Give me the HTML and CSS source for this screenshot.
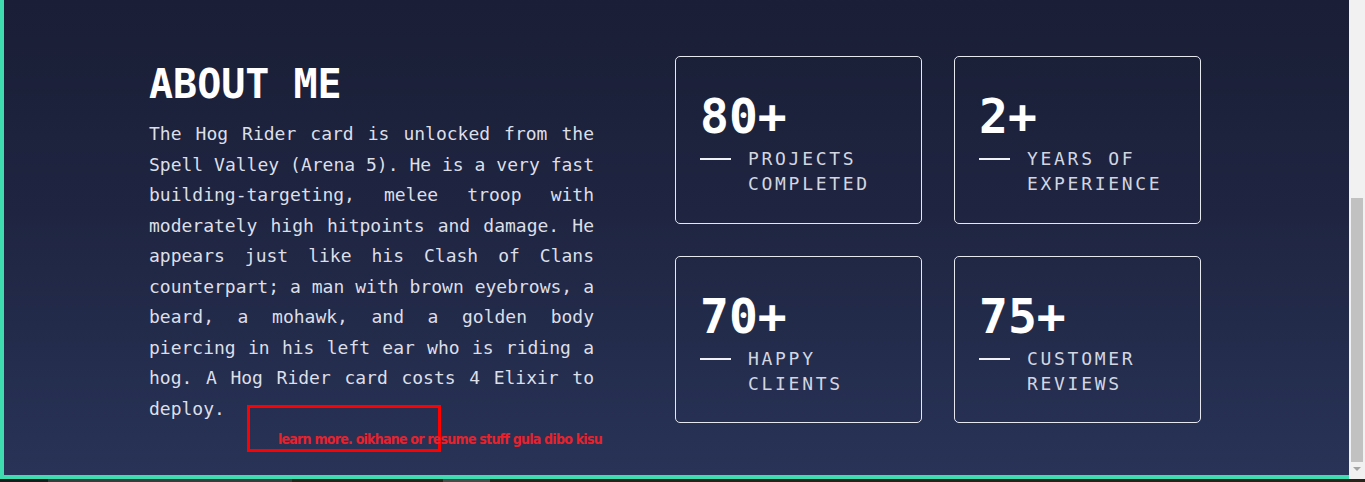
FILE: index.html
```html
<!DOCTYPE html>
<html lang="en">
<head>
<meta charset="utf-8">
<title>About me</title>
<link rel="stylesheet" href="styles.css">
</head>
<body>
<div class="screen">
  <div class="viewport">
    <main class="frame">
      <section class="about">
        <div class="about-text">
          <h1 class="title">ABOUT ME</h1>
          <p class="desc">The Hog Rider card is unlocked from the Spell Valley (Arena 5). He is a very fast building-targeting, melee troop with moderately high hitpoints and damage. He appears just like his Clash of Clans counterpart; a man with brown eyebrows, a beard, a mohawk, and a golden body piercing in his left ear who is riding a hog. A Hog Rider card costs 4 Elixir to deploy.</p>
        </div>
        <div class="stats">
          <div class="card">
            <div class="num">80+</div>
            <div class="label"><span class="dash"></span><span class="label-text">PROJECTS<br>COMPLETED</span></div>
          </div>
          <div class="card">
            <div class="num">2+</div>
            <div class="label"><span class="dash"></span><span class="label-text">YEARS OF<br>EXPERIENCE</span></div>
          </div>
          <div class="card">
            <div class="num">70+</div>
            <div class="label"><span class="dash"></span><span class="label-text">HAPPY<br>CLIENTS</span></div>
          </div>
          <div class="card">
            <div class="num">75+</div>
            <div class="label"><span class="dash"></span><span class="label-text">CUSTOMER<br>REVIEWS</span></div>
          </div>
        </div>
      </section>
      <div class="note-box"></div>
      <div class="note-text">learn more. oikhane or resume stuff gula dibo kisu</div>
    </main>
    <div class="scrollbar">
      <div class="thumb"></div>
      <div class="arrow"></div>
    </div>
  </div>
  <div class="taskbar"></div>
</div>
</body>
</html>
```

FILE: styles.css
```css
* { box-sizing: border-box; }

html, body {
  margin: 0;
  padding: 0;
  overflow: hidden;
  background: #1c1c1c;
}

.screen {
  width: 1365px;
  height: 482px;
  display: flex;
  flex-direction: column;
}

.viewport {
  height: 479px;
  display: flex;
}

.frame {
  position: relative;
  flex: 1;
  border-left: 4px solid #3fdcb0;
  border-bottom: 4px solid #3fdcb0;
  background: linear-gradient(180deg, #1a1e36 0%, #1f2541 45%, #283357 100%);
  font-family: "DejaVu Sans Mono", "Liberation Mono", monospace;
  overflow: hidden;
}

.about {
  display: flex;
  align-items: flex-start;
  gap: 81px;
  padding: 56px 0 0 145px;
}

.about-text {
  width: 445px;
}

.title {
  margin: 4px 0 11px;
  font-size: 40px;
  line-height: 48px;
  font-weight: bold;
  color: #ffffff;
}

.desc {
  margin: 0;
  font-size: 18px;
  line-height: 30.5px;
  text-align: justify;
  color: #dcdfe8;
}

.stats {
  display: grid;
  grid-template-columns: 247px 247px;
  grid-template-rows: 168px 167px;
  gap: 32px;
}

.card {
  border: 1px solid #e6e8ef;
  border-radius: 5px;
  padding: 30px 0 0 24px;
}

.num {
  font-size: 48px;
  line-height: 58px;
  font-weight: bold;
  color: #ffffff;
}

.label {
  display: flex;
  align-items: flex-start;
  margin-top: 1px;
}

.dash {
  width: 31px;
  height: 2px;
  background: #f0f1f5;
  margin-top: 12px;
  margin-right: 17px;
  flex: none;
}

.label-text {
  font-size: 18px;
  line-height: 25px;
  letter-spacing: 2.7px;
  color: #d3d6e0;
}

.note-box {
  position: absolute;
  left: 243px;
  top: 405px;
  width: 194px;
  height: 47px;
  border: 3px solid #ff0000;
}

.note-text {
  position: absolute;
  left: 274px;
  top: 431px;
  font-family: "DejaVu Sans", sans-serif;
  font-stretch: condensed;
  font-weight: bold;
  font-size: 14px;
  line-height: 17px;
  letter-spacing: -0.75px;
  color: #e8222c;
  white-space: nowrap;
}

.scrollbar {
  width: 16px;
  position: relative;
  background: #f1f1f1;
}

.thumb {
  position: absolute;
  left: 2px;
  top: 198px;
  width: 12px;
  height: 264px;
  background: #c1c1c1;
}

.arrow {
  position: absolute;
  left: 4px;
  top: 467px;
  width: 0;
  height: 0;
  border-left: 4px solid transparent;
  border-right: 4px solid transparent;
  border-top: 4px solid #a3a3a3;
}

.taskbar {
  height: 3px;
  background: linear-gradient(90deg, #1b1b1b 0, #1b1b1b 48px, #3a3c3c 48px, #3a3c3c 292px, #2a2119 292px, #2a2119 443px, #4e4846 443px, #4e4846 490px, #2a2119 490px);
}
```
